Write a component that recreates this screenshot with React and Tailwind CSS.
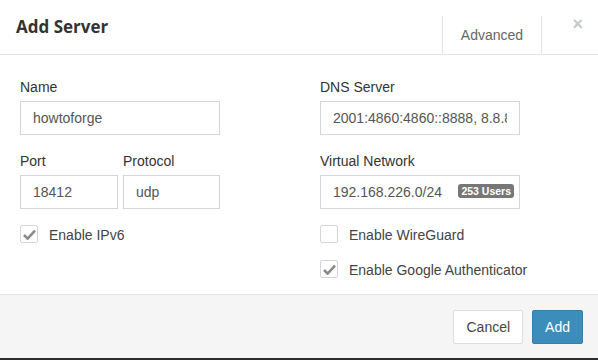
import { useState } from "react";

function Field({ label, value, className = "", children }) {
  return (
    <div className={`flex flex-col ${className}`}>
      <label className="text-[14px] leading-[20px] text-[#333] mb-[4px]">
        {label}
      </label>
      <div className="relative">
        <input
          readOnly
          value={value}
          className="w-full h-[34px] border border-[#d2d6de] px-3 text-[14px] text-[#555] outline-none bg-white"
        />
        {children}
      </div>
    </div>
  );
}

function Check({ checked, label, onToggle, className = "" }) {
  return (
    <div
      onClick={onToggle}
      className={`flex items-center h-[18px] cursor-pointer whitespace-nowrap ${className}`}
    >
      <div className="w-[18px] h-[18px] shrink-0 border border-[#d2d6de] rounded-[2px] bg-white flex items-center justify-center">
        {checked && (
          <svg width="13" height="11" viewBox="0 0 13 11">
            <path
              d="M1 6 L4.6 9.6 L12 1.6"
              fill="none"
              stroke="#8a8a8a"
              strokeWidth="2.6"
            />
          </svg>
        )}
      </div>
      <span className="ml-[11px] text-[14px] leading-[18px] pt-[2px] text-[#444]">{label}</span>
    </div>
  );
}

export default function App() {
  const [ipv6, setIpv6] = useState(true);
  const [wg, setWg] = useState(false);
  const [gauth, setGauth] = useState(true);

  return (
    <div
      className="w-[598px] h-[360px] bg-white flex flex-col overflow-hidden"
      style={{ fontFamily: '"Liberation Sans", Arial, sans-serif' }}
    >
      {/* Header */}
      <div className="h-[55px] border-b border-[#e5e5e5] flex items-start shrink-0">
        <h1
          className="pl-4 pt-[16px] text-[17px] leading-[22px] font-bold text-[#333]"
          style={{ fontFamily: '"Open Sans", sans-serif' }}
        >
          Add Server
        </h1>
        <div className="flex-1" />
        <div className="mt-[16px] h-[38px] w-[100px] border-x border-[#e2e2e2] flex items-center justify-center text-[14px] text-[#666]">
          Advanced
        </div>
        <div className="w-[56px] flex justify-end pr-[15px] pt-[14px] text-[18px] leading-[20px] font-bold text-[#c8c8c8]">
          ×
        </div>
      </div>

      {/* Body */}
      <div className="flex gap-[100px] px-5 pt-[22px] pb-[16px]">
        <div className="w-[200px] flex flex-col">
          <Field label="Name" value="howtoforge" />
          <div className="flex gap-[5px] mt-[16px]">
            <Field label="Port" value="18412" className="w-[98px]" />
            <Field label="Protocol" value="udp" className="w-[97px]" />
          </div>
          <Check
            checked={ipv6}
            label="Enable IPv6"
            onToggle={() => setIpv6(!ipv6)}
            className="mt-[16px]"
          />
        </div>

        <div className="w-[200px] flex flex-col">
          <Field label="DNS Server" value="2001:4860:4860::8888, 8.8.8.8" />
          <Field
            label="Virtual Network"
            value="192.168.226.0/24"
            className="mt-[16px]"
          >
            <span className="absolute right-[6px] top-[9px] h-[14px] px-[3px] rounded-[3px] bg-[#777] text-white text-[10.5px] leading-[14px] font-bold">
              253 Users
            </span>
          </Field>
          <Check
            checked={wg}
            label="Enable WireGuard"
            onToggle={() => setWg(!wg)}
            className="mt-[16px]"
          />
          <Check
            checked={gauth}
            label="Enable Google Authenticator"
            onToggle={() => setGauth(!gauth)}
            className="mt-[17px]"
          />
        </div>
      </div>

      {/* Footer */}
      <div className="flex-1 bg-[#f5f5f5] border-t border-[#e5e5e5] flex justify-end items-start gap-[9px] pt-[15px] pr-[15px]">
        <button className="h-[34px] px-3 border border-[#ddd] bg-white text-[14px] text-[#444] rounded-[2px]">
          Cancel
        </button>
        <button className="h-[34px] px-3 border border-[#367fa9] bg-[#3c8dbc] text-[14px] text-white rounded-[2px]">
          Add
        </button>
      </div>
      <div className="h-[2px] bg-[#2d2d2d] shrink-0" />
    </div>
  );
}
